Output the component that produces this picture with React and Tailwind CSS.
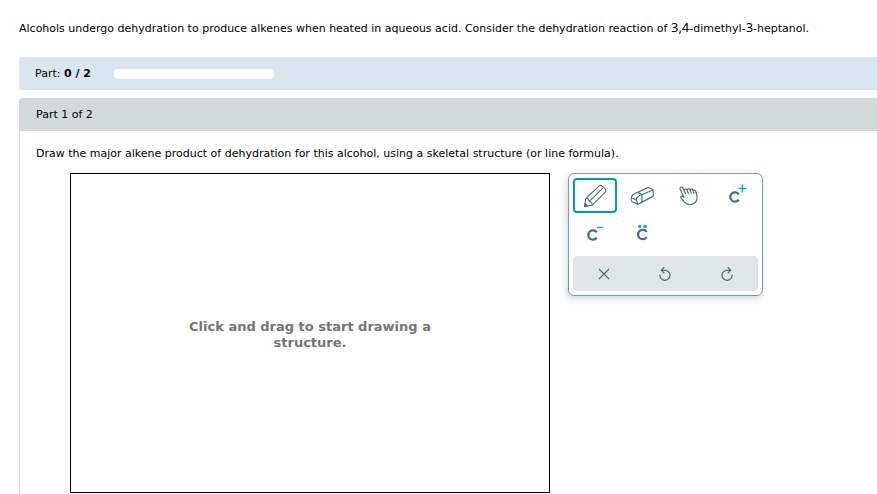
import React from "react";

const C = "#47717e";
const ACCENT = "#00b4cc";

function PencilIcon() {
  return (
    <svg width="24" height="24" viewBox="0 0 24 24" fill="none" stroke={C} strokeWidth="1.1" strokeLinejoin="round">
      <path d="M1.500 22.500 2.800 14.500 16.500 1.600C17.500.8 22.300 3.500 22.800 6.500C22.900 7.200 22.800 7.700 22.300 8.200L9.200 21.200Z" />
      <path d="M2.800 14.500C4.500 14 6.200 15.200 6.200 17.500C8 17.500 9.500 19.200 9.200 21.200M6.200 17.300 20.300 3.700" />
      <path d="M1.500 22.500 2 19.400 4.600 21.900Z" fill={C} />
    </svg>
  );
}

function EraserIcon() {
  return (
    <svg width="24" height="20" viewBox="0 0 24 20" fill="none" stroke={C} strokeWidth="1.2" strokeLinejoin="round">
      <path d="M1.200 12.500C1.500 10 3 8.200 5 7.500L17.300 1.900C18 1.600 18.600 1.600 19.200 1.900L22.300 3.200C22.900 3.500 23.100 3.900 23.100 4.500L23.300 9.200C23.300 9.900 23 10.300 22.300 10.600L8.800 17.900C8.300 18.200 7.700 18.100 7.200 17.900L2.500 16C1.400 15.500 1 14.500 1.200 12.500Z" />
      <path d="M1.500 12 5.300 13.400C6.600 13.900 7.300 15.500 7.300 17.900M6 13.700C6.800 11.400 8.500 9.900 11.700 8.800L22.900 4M7.500 6.400 11 7.800C11.700 8.200 12 8.900 12 9.800L12 16.100" />
    </svg>
  );
}

function HandIcon() {
  return (
    <svg width="20" height="20" viewBox="0 0 20 20" fill="none" stroke={C} strokeWidth="1.200" strokeLinejoin="round" strokeLinecap="round">
      <path d="M4.900 11.500 1.200 3.200C.4 1.300 2.900.2 3.800 2L6.600 7.800M5.300 5C5 3.100 7.300 2.500 8 4.200L9.400 7.500M8.200 4.200C8.200 2.500 10.400 2.300 11 3.900L12.300 7.200M11.200 4.200C11.300 2.600 13.400 2.600 13.900 4L15.100 7.300M14.200 5C14.600 3.700 16.300 3.800 16.700 5.100C18 8.800 19.500 13.500 16.200 16.500C13 19.500 8.200 19.200 5.500 16.200L2.200 12.200C1.200 10.800 2.500 9.600 3.900 10.400L4.900 11.500" />
    </svg>
  );
}

function Tool({ label, active, children }) {
  return (
    <button
      type="button"
      aria-label={label}
      className={
        active
          ? "flex h-[35px] items-center justify-center rounded-sm border-2 border-[#009bb3]"
          : "flex h-[35px] items-center justify-center"
      }
    >
      {children}
    </button>
  );
}

const LETTER_SHIFT = {
  plus: "translate(9.500 12)",
  minus: "translate(8.500 13)",
  pair: "translate(11.300 12.500)",
};

function Carbon({ mark }) {
  return (
    <svg width="22" height="22" viewBox="0 0 22 22" fill="none" className="overflow-visible">
      <path transform={LETTER_SHIFT[mark]} d="M4.300-2.700A4.700 4.700 0 1 0 4.300 2.700" stroke={C} strokeWidth="2.300" />
      {mark === "plus" && <path d="M13.500 3.500h8M17.500-.5v8" stroke={ACCENT} strokeWidth="1.500" />}
      {mark === "minus" && <path d="M13 5.500h6" stroke={ACCENT} strokeWidth="1.500" />}
      {mark === "pair" && (
        <g fill={ACCENT}>
          <circle cx="8.700" cy="4.500" r="1.700" />
          <circle cx="14" cy="4.500" r="1.700" />
        </g>
      )}
    </svg>
  );
}

function UndoShape() {
  return <path d="M1 7.600A5 5 0 1 0 6 3.300H2.500M5.300.3 2.300 3.300 5.300 6.300" />;
}

function Toolbox() {
  return (
    <div className="w-[195px] shrink-0 rounded-md border border-[#7b9ba5] bg-white p-1 shadow-[-2px_3px_6px_rgba(70,110,125,0.25)]">
      <div className="grid grid-cols-[44px_44px_44px_44px] gap-x-[3px] gap-y-[2px]">
        <Tool label="Draw" active><PencilIcon /></Tool>
        <Tool label="Erase"><EraserIcon /></Tool>
        <Tool label="Move"><HandIcon /></Tool>
        <Tool label="Positive charge"><Carbon mark="plus" /></Tool>
        <Tool label="Negative charge"><Carbon mark="minus" /></Tool>
        <Tool label="Lone pair"><Carbon mark="pair" /></Tool>
      </div>
      <div className="mt-[6px] grid grid-cols-3 rounded-sm bg-[#dfe6e7]">
        <Tool label="Clear">
          <svg width="12" height="12" viewBox="0 0 12 12" stroke={C} strokeWidth="1.200"><path d="m1 1 10 10M11 1 1 11" /></svg>
        </Tool>
        <Tool label="Undo">
          <svg width="12" height="14" viewBox="0 0 12 14" fill="none" stroke={C} strokeWidth="1.300"><UndoShape /></svg>
        </Tool>
        <Tool label="Redo">
          <svg width="12" height="14" viewBox="0 0 12 14" fill="none" stroke={C} strokeWidth="1.300"><g transform="translate(12 0) scale(-1 1)"><UndoShape /></g></svg>
        </Tool>
      </div>
    </div>
  );
}

export default function App() {
  return (
    <main className="flex min-h-screen flex-col bg-white pl-[19px] pt-[19px] font-['Verdana','DejaVu_Sans',sans-serif] text-[11px] leading-4 text-black">
      <p>
        Alcohols undergo dehydration to produce alkenes when heated in aqueous acid. Consider the dehydration reaction of{" "}
        <span className="font-['Noto_Sans',sans-serif] text-[13px]">3,4</span>-dimethyl-
        <span className="font-['Noto_Sans',sans-serif] text-[13px]">3</span>-heptanol.
      </p>
      <div className="mt-5 flex h-[33px] items-center rounded-l bg-[#dae6ef] pl-4">
        <span>Part: <b>0 / 2</b></span>
        <div role="progressbar" aria-label="Parts completed" aria-valuenow={0} aria-valuemax={2} className="ml-[23px] h-[10px] w-40 rounded-sm bg-white" />
      </div>
      <section className="mt-2 grow rounded-tl border-l border-[#d1d9db]">
        <h2 className="-ml-px flex h-[33px] items-center rounded-tl bg-[#d1d9db] pl-[17px]">Part 1 of 2</h2>
        <div className="pl-4 pt-[15px]">
          <p>Draw the major alkene product of dehydration for this alcohol, using a skeletal structure (or line formula).</p>
          <div className="ml-[34px] mt-[11px] flex items-start gap-[18px]">
            <div className="flex h-80 w-[480px] shrink-0 items-center justify-center border border-black">
              <p className="w-[250px] pt-1 text-center text-[13px] font-bold text-[#757575]">Click and drag to start drawing a structure.</p>
            </div>
            <Toolbox />
          </div>
        </div>
      </section>
    </main>
  );
}
